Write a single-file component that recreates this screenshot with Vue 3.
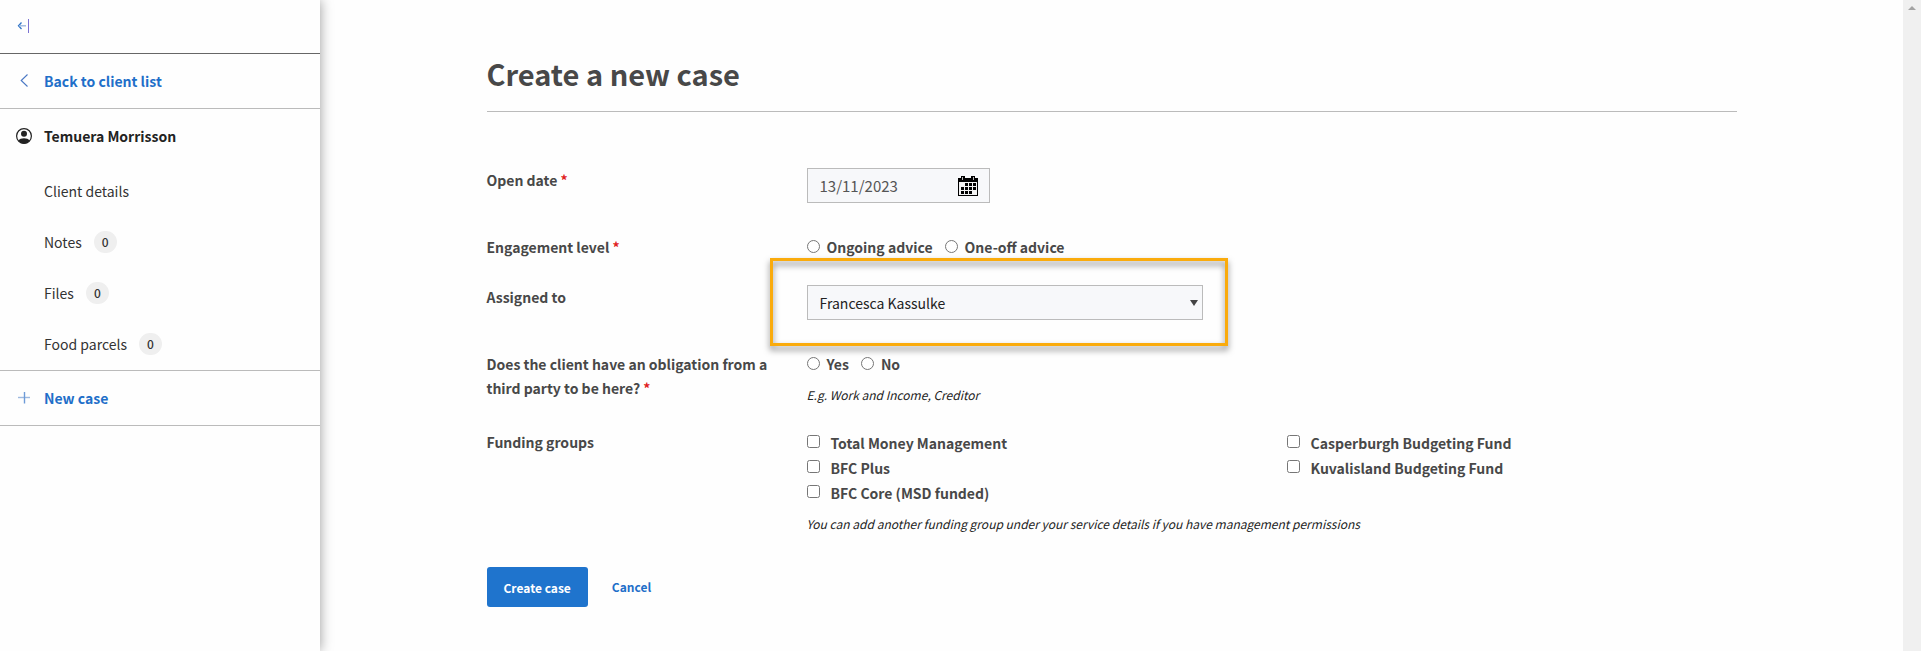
<script setup>
  import {ref} from 'vue'

  const clientLinks = [
    {label: 'Client details'},
    {label: 'Notes', count: 0},
    {label: 'Files', count: 0},
    {label: 'Food parcels', count: 0}
  ]

  const advisors = ['Francesca Kassulke']

  const fundingGroups = [
    'Total Money Management',
    'Casperburgh Budgeting Fund',
    'BFC Plus',
    'Kuvalisland Budgeting Fund',
    'BFC Core (MSD funded)'
  ]

  const openDate = ref('13/11/2023')
  const engagement = ref('')
  const assignedTo = ref('Francesca Kassulke')
  const obligation = ref('')
  const selectedGroups = ref([])

  // filled squares of the calendar glyph, column and row
  const days = [
    [1, 0], [2, 0], [3, 0],
    [0, 1], [1, 1], [2, 1], [3, 1],
    [0, 2], [1, 2], [2, 2]
  ]
</script>

<template>
  <div class="page">
    <aside class="sidebar">
      <div class="sidebar__top">
        <button type="button" class="collapse" aria-label="Collapse menu">
          <svg width="24" height="24" viewBox="0 0 24 24" fill="none">
            <path d="M9.500 6.500L6.500 9.800L9.500 13" stroke="#2f74c8" stroke-width="1.300" />
            <path d="M7 9.800H14" stroke="#9db9df" stroke-width="1.400" />
            <path d="M16.500 3V17" stroke="#7b72d2" stroke-width="1" />
          </svg>
        </button>
      </div>

      <a href="#" class="sidebar__link sidebar__link--back">
        <svg width="24" height="24" viewBox="0 0 24 24" fill="none">
          <path d="M15.500 5.500L9.200 11.500L15.500 17.500" stroke="#4a78c4" stroke-width="1.100" />
        </svg>
        <span>Back to client list</span>
      </a>

      <nav class="client">
        <div class="client__name">
          <svg width="24" height="24" viewBox="0 0 24 24">
            <circle cx="12" cy="12" r="7.400" fill="none" stroke="#222" stroke-width="1.200" />
            <circle cx="12" cy="9.800" r="3" fill="#222" />
            <path d="M6.600 16.500C8 13.600 16 13.600 17.400 16.500C15 20.600 9 20.600 6.600 16.500Z" fill="#222" />
          </svg>
          <span>Temuera Morrisson</span>
        </div>
        <a href="#" class="client__link" v-for="link in clientLinks" :key="link.label">
          {{ link.label }}
          <span class="count" v-if="link.count !== undefined">{{ link.count }}</span>
        </a>
      </nav>

      <a href="#" class="sidebar__link sidebar__link--new">
        <svg width="24" height="24" viewBox="0 0 24 24" fill="none">
          <path d="M6 11.500H18" stroke="#9db9df" stroke-width="1.400" />
          <path d="M12.500 6V17.500" stroke="#6d9bd8" stroke-width="1.400" />
        </svg>
        <span>New case</span>
      </a>
    </aside>

    <main class="main">
      <form class="form" @submit.prevent>
        <h1>Create a new case</h1>

        <div class="row">
          <label for="openDate" class="row__label">Open date <span class="required">*</span></label>
          <div class="date">
            <input id="openDate" type="text" v-model="openDate">
            <button type="button" aria-label="Choose date">
              <svg width="20" height="20" viewBox="0 0 20 20" shape-rendering="crispEdges">
                <path d="M0 2H20V20H0Z" fill="#000" />
                <path d="M1 6H19V19H1Z" fill="#f2f2f2" />
                <path d="M3 0H7V4H3ZM13 0H17V4H13Z" fill="#000" />
                <path d="M4 1H5V4H4ZM15 1H16V4H15Z" fill="#bbb" />
                <rect
                  v-for="[col, line] in days"
                  :key="col + '-' + line"
                  :x="3 + col * 4"
                  :y="7 + line * 4"
                  width="3"
                  height="3"
                />
              </svg>
            </button>
          </div>
        </div>

        <div class="row row--compact" role="radiogroup" aria-labelledby="engagementLabel">
          <div id="engagementLabel" class="row__label">Engagement level <span class="required">*</span></div>
          <div class="radios">
            <label><input type="radio" name="engagement" value="ongoing" v-model="engagement">Ongoing advice</label>
            <label><input type="radio" name="engagement" value="oneoff" v-model="engagement">One-off advice</label>
          </div>
        </div>

        <div class="row">
          <label for="assignedTo" class="row__label">Assigned to</label>
          <div class="assigned">
            <select id="assignedTo" v-model="assignedTo">
              <option v-for="advisor in advisors" :key="advisor">{{ advisor }}</option>
            </select>
            <svg class="arrow" width="8" height="6" viewBox="0 0 8 6">
              <path d="M0 0H8L4 6Z" fill="#444" />
            </svg>
            <div class="highlight"></div>
          </div>
        </div>

        <div class="row row--compact" role="radiogroup" aria-labelledby="obligationLabel">
          <div id="obligationLabel" class="row__label">
            Does the client have an obligation from a third party to be here? <span class="required">*</span>
          </div>
          <div>
            <div class="radios">
              <label><input type="radio" name="obligation" value="yes" v-model="obligation">Yes</label>
              <label><input type="radio" name="obligation" value="no" v-model="obligation">No</label>
            </div>
            <p class="hint">E.g. Work and Income, Creditor</p>
          </div>
        </div>

        <div class="row" role="group" aria-labelledby="fundingLabel">
          <div id="fundingLabel" class="row__label">Funding groups</div>
          <div>
            <div class="groups">
              <label v-for="group in fundingGroups" :key="group">
                <input type="checkbox" :value="group" v-model="selectedGroups">{{ group }}
              </label>
            </div>
            <p class="hint">You can add another funding group under your service details if you have management permissions</p>
          </div>
        </div>

        <div class="actions">
          <button type="submit" class="btn">Create case</button>
          <a href="#">Cancel</a>
        </div>
      </form>
    </main>

    <div class="scrollbar">
      <svg width="8" height="4" viewBox="0 0 8 4">
        <path d="M0 4L4 0L8 4Z" fill="#a3a3a3" />
      </svg>
    </div>
  </div>
</template>

<style>
body {
  background-color: #fefefe;
}
</style>

<style scoped>
* {
  box-sizing: border-box;
}
.page {
  display: flex;
  min-height: 100vh;
  font-family: "Source Sans Pro", "Noto Sans CJK SC", sans-serif;
  font-size: 14px;
  line-height: 24px;
  color: #484848;
}
a {
  color: #1f6fc9;
  text-decoration: none;
}
button {
  font-family: inherit;
  border: none;
  padding: 0;
  background: none;
  cursor: pointer;
}
svg {
  display: block;
  flex-shrink: 0;
}

.sidebar {
  flex: 0 0 320px;
  background-color: #fefefe;
  box-shadow: 0 0 12px rgba(0, 0, 0, 0.4);
}
.sidebar__top {
  padding: 16px 12px 13px;
  border-bottom: 1px solid #666;
}
.collapse {
  display: block;
}
.sidebar__link,
.client__name {
  display: flex;
  align-items: center;
  gap: 8px;
  padding: 15px 12px;
  font-weight: 600;
}
.sidebar__link--back {
  border-bottom: 1px solid #bbb;
}
.sidebar__link--new {
  border-top: 1px solid #bbb;
  border-bottom: 1px solid #bbb;
}
.client {
  padding-bottom: 1px;
}
.client__name {
  padding-bottom: 17px;
  color: #222;
}
.client__link {
  display: flex;
  align-items: center;
  gap: 12px;
  height: 51px;
  padding-left: 44px;
  color: #333;
}
.count {
  min-width: 23px;
  border-radius: 11px;
  background-color: #efefef;
  font-size: 12px;
  font-weight: 500;
  line-height: 22px;
  text-align: center;
}

.main {
  flex: 1;
  padding: 55px 24px 44px;
}
.form {
  max-width: 1250px;
  margin: 0 auto;
}
h1 {
  margin: 0 0 56px;
  padding-bottom: 20px;
  border-bottom: 1px solid #bbb;
  font-size: 29px;
  font-weight: 700;
  line-height: 36px;
}
.row {
  display: grid;
  grid-template-columns: 320px 1fr;
  margin-bottom: 32px;
}
.row--compact {
  margin-bottom: 26px;
}
.row__label {
  padding-right: 24px;
  font-weight: 600;
}
.required {
  color: #e02020;
}

.date {
  display: flex;
  align-items: center;
  width: 183px;
  height: 35px;
  padding: 0 11px 0 12px;
  border: 1px solid #bbb;
  background-color: #f7f8fa;
}
.date input {
  flex: 1;
  min-width: 0;
  padding: 0;
  border: none;
  background: none;
  font-family: inherit;
  font-size: 15px;
  color: #555;
  outline: none;
}

.radios {
  display: flex;
  gap: 12px;
}
.radios label,
.groups label {
  display: flex;
  align-items: center;
  font-weight: 600;
}
.radios input,
.groups input {
  width: 13px;
  height: 13px;
  margin: 0 7px 2px 0;
}
.groups input {
  margin-right: 11px;
}

.assigned {
  position: relative;
  width: 396px;
}
.assigned select {
  display: block;
  width: 100%;
  height: 35px;
  padding: 0 24px 0 12px;
  border: 1px solid #bbb;
  border-radius: 0;
  background-color: #f7f8fa;
  font-family: inherit;
  font-size: 14px;
  color: #222;
  appearance: none;
}
.arrow {
  position: absolute;
  top: 15px;
  right: 5px;
  pointer-events: none;
}
.highlight {
  position: absolute;
  inset: -27px -25px -26px -37px;
  border: 3px solid #faab0c;
  filter: drop-shadow(0 4px 3px rgba(0, 0, 0, 0.5));
  pointer-events: none;
}

.groups {
  display: grid;
  grid-template-columns: 480px 1fr;
}
.groups label {
  height: 25px;
}
.hint {
  margin: 10px 0 0;
  font-size: 12px;
  font-style: italic;
  line-height: 18px;
  color: #222;
}

.actions {
  display: flex;
  align-items: center;
  gap: 24px;
  margin-top: 34px;
  font-size: 12px;
  font-weight: 600;
}
.btn {
  height: 40px;
  padding: 0 17px;
  border-radius: 3px;
  background-color: #1f74cd;
  color: #fff;
  font-size: 12px;
  font-weight: 700;
}

.scrollbar {
  display: flex;
  justify-content: center;
  flex: 0 0 18px;
  padding-top: 6px;
  background-color: #f0f0f0;
}
</style>
